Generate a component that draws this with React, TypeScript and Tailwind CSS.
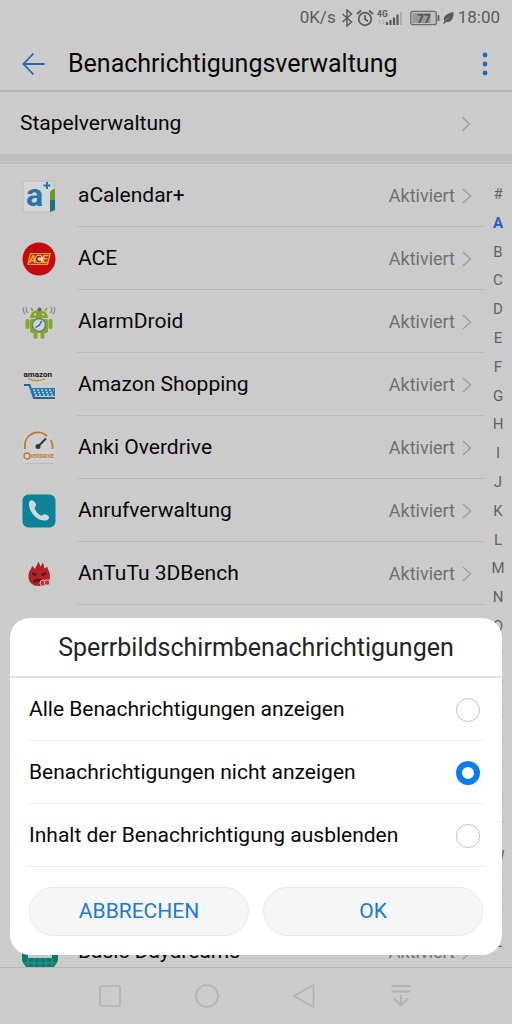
import { useState } from "react";
import type { ReactNode } from "react";

const CalendarIcon = () => (
  <svg viewBox="0 0 34 34" className="size-[34px] overflow-visible" aria-hidden="true">
    <rect x="1" y="2" width="31" height="31" rx="1" fill="#d3d5d6" stroke="#b9bbbc" />
    <path d="M28 14q1-4 5-4v11h-5z" fill="#6d9a2d" />
    <path d="M28 21h5v10l-5 2z" fill="#1f6f8d" />
    <text x="4" y="27" fontSize="32" fontWeight="700" fill="#2676a6" fontFamily="Roboto, sans-serif">a</text>
    <path d="M25 3v7M21.500 6.500h7" stroke="#2d76b4" strokeWidth="2" />
  </svg>
);

const AceIcon = () => (
  <svg viewBox="0 0 34 34" className="size-[34px]" aria-hidden="true">
    <circle cx="17" cy="17" r="16.500" fill="#c6080f" />
    <path d="M8 11h21l-3 12H5z" fill="#d8a51c" />
    <path d="M9 12.300h18.300l-2.400 9.400H6.600z" fill="#bd1b12" />
    <text x="7" y="21" fontSize="11" fontWeight="700" fontStyle="italic" fill="#eab51f" fontFamily="Roboto, sans-serif">A</text>
    <text x="20" y="21" fontSize="11" fontWeight="700" fontStyle="italic" fill="#eab51f" fontFamily="Roboto, sans-serif">E</text>
    <circle cx="17" cy="17" r="4.200" fill="#e9ddc5" />
    <path d="M18.800 15.200a2.500 2.500 0 1 0 0 3.600" fill="none" stroke="#b81313" strokeWidth="1.800" />
  </svg>
);

const AlarmDroidIcon = () => (
  <svg viewBox="0 0 34 34" className="size-[34px]" aria-hidden="true">
    <path d="M8 13a9 8 0 0 1 18 0z" fill="#82a72b" />
    <rect x="8" y="14" width="18" height="14" rx="2" fill="#82a72b" />
    <rect x="3.500" y="14" width="4" height="10" rx="1.900" fill="#82a72b" />
    <rect x="26.500" y="14" width="4" height="10" rx="1.900" fill="#82a72b" />
    <path d="M13.500 26v6M20.500 26v6" stroke="#82a72b" strokeWidth="4" strokeLinecap="round" />
    <path d="M11 6 9 3M23 6l2-3" stroke="#82a72b" strokeWidth="1.500" />
    <circle cx="13" cy="9.500" r="1" fill="#e1e5d3" />
    <circle cx="21" cy="9.500" r="1" fill="#e1e5d3" />
    <circle cx="17.500" cy="4.500" r="2" fill="#5060b0" />
    <circle cx="17" cy="20" r="6.500" fill="#c9d4da" stroke="#6c7d86" strokeWidth="1.400" />
    <path d="m13.500 22.500 4-2.500 2-4" fill="none" stroke="#3e5682" strokeWidth="1.300" />
    <path d="M2 2q-2 3 1 7M5 2q-2 3 1 6M32 2q2 3-1 7M29 2q2 3-1 6" fill="none" stroke="#8a8fa6" strokeWidth="1.300" />
  </svg>
);

const AmazonIcon = () => (
  <svg viewBox="0 0 34 34" className="size-[34px]" aria-hidden="true">
    <text x="1.500" y="9" fontSize="8" fontWeight="700" fill="#161616" fontFamily="Roboto, sans-serif">amazon</text>
    <path d="M6 10.500q8 4 17 .5" fill="none" stroke="#c98524" strokeWidth="1.200" />
    <path d="M2 17h5.500L12 30h21" fill="none" stroke="#1f6694" strokeWidth="2" />
    <path d="M8 20h25v8H11z" fill="#287ba9" />
    <path d="M11 22h21M12 24.500h20M13 27h19" stroke="#b9d4df" strokeWidth="1.500" strokeDasharray="2 2" />
  </svg>
);

const OverdriveIcon = () => (
  <svg viewBox="0 0 34 34" className="size-[34px]" aria-hidden="true">
    <rect x="1" y="2" width="32" height="31" rx="3" fill="#cfcfcf" />
    <path d="M3 18V15A13 12.500 0 0 1 25 5M28.500 9q2.500 3 2 9" fill="none" stroke="#be7a2c" strokeWidth="1.800" />
    <path d="m16 15.500 8-8" stroke="#31373b" strokeWidth="2" />
    <circle cx="16" cy="15.500" r="2.500" fill="#31373b" />
    <circle cx="5" cy="25" r="3" fill="none" stroke="#be7a2c" strokeWidth="1.300" />
    <text x="8.500" y="27" fontSize="5" fontWeight="700" fill="#be7a2c" fontFamily="Roboto, sans-serif">VERDRIVE</text>
    <path d="M3 32.500h28" stroke="#bcbcbc" strokeWidth="1" />
  </svg>
);

const PhoneIcon = () => (
  <svg viewBox="0 0 34 34" className="size-[34px]" aria-hidden="true">
    <rect x="0.500" y="0.500" width="33" height="33" rx="6" fill="#0c8398" />
    <path d="M8.500 6.500c2-1 4 .3 5.200 3.200.9 2.200-.7 3-1.200 4.500 1.500 3.500 3.800 6 6.700 7.600 1.800-.4 2.200-2 4.500-1.300 3 .9 4.200 3 2.800 4.500-1.300 1.600-4.500 2-7.500 1.100C12.500 23.500 8 18 7 11.500c-.3-2.200.2-4.200 1.500-5z" fill="#cadbd3" />
  </svg>
);

const AntutuIcon = () => (
  <svg viewBox="0 0 34 34" className="size-[34px]" aria-hidden="true">
    <path d="M17 29C9 29 6 24 6.500 18c.3-4 2.500-6 4-9l2.500 3 3.500-7.500 2 5 2.500-4 1.500 6 3-2c-.5 3 2.500 4.500 2.500 9.500 0 6-4 10-11 10z" fill="#b32128" />
    <path d="m10 15 5 2-1 2-4-1zM24 15l-5 2 1 2 4-1z" fill="#571a20" />
    <path d="M11 24c3-3 8-3 11 0l-1 2c-3-2-6-2-9 0z" fill="#571a20" />
    <circle cx="21" cy="26" r="3" fill="#bd3439" stroke="#d8b5b6" />
    <rect x="22.500" y="23" width="5" height="5" rx="1.500" fill="#bd3439" stroke="#d8b5b6" />
  </svg>
);

const DaydreamIcon = () => (
  <svg viewBox="0 0 36 34" className="h-[34px] w-9" aria-hidden="true">
    <rect width="36" height="34" rx="11" fill="#087d6c" />
    <path d="M6 20h24v3H6z" fill="#bccfc9" />
    <path d="M2 28h32M6 23v9M12 23v10M18 23v10M24 23v10M30 23v9" stroke="#359282" strokeWidth="1" />
  </svg>
);

const Chevron = () => (
  <svg viewBox="0 0 10 16" className="h-4 w-[10px] shrink-0" fill="none" stroke="#a2a2a2" strokeWidth="1.700" aria-hidden="true">
    <path d="m1 1 7.500 7L1 15" />
  </svg>
);

const apps: { name: string; icon: ReactNode }[] = [
  { name: "aCalendar+", icon: <CalendarIcon /> },
  { name: "ACE", icon: <AceIcon /> },
  { name: "AlarmDroid", icon: <AlarmDroidIcon /> },
  { name: "Amazon Shopping", icon: <AmazonIcon /> },
  { name: "Anki Overdrive", icon: <OverdriveIcon /> },
  { name: "Anrufverwaltung", icon: <PhoneIcon /> },
  { name: "AnTuTu 3DBench", icon: <AntutuIcon /> },
];

const options = [
  "Alle Benachrichtigungen anzeigen",
  "Benachrichtigungen nicht anzeigen",
  "Inhalt der Benachrichtigung ausblenden",
];

const letters = "#ABCDEFGHIJKLMNOPQRSTUVWXYZ".split("");

function AppRow({ name, icon }: { name: string; icon: ReactNode }) {
  return (
    <li>
      <a href="#app" className="flex h-[63px] items-center pl-[22px]">
        <span className="flex w-[55px] shrink-0">{icon}</span>
        <span className="flex h-full min-w-0 flex-1 items-center border-b border-[#b8b8b8] pt-px pr-3 pl-px">
          <span className="min-w-0 flex-1 truncate text-[21px]">{name}</span>
          <span className="mr-[7px] text-lg text-[#707070]">Aktiviert</span>
          <Chevron />
        </span>
      </a>
    </li>
  );
}

function StatusBar() {
  return (
    <div className="flex h-9 shrink-0 items-center justify-end pr-3 text-[17px] text-[#5c5c5c]">
      <span>0K/s</span>
      <svg viewBox="0 0 12 18" className="ml-[5px] h-[18px] w-3" fill="none" stroke="#5c5c5c" strokeWidth="1.500" aria-hidden="true">
        <path d="m1.500 5 9 8L6 17V1l4.500 4-9 8" />
      </svg>
      <svg viewBox="0 0 18 18" className="ml-[3px] size-[18px]" fill="none" stroke="#5c5c5c" strokeWidth="1.700" aria-hidden="true">
        <circle cx="9" cy="10" r="6.300" />
        <path d="M9 6v4.300l3 2M1 5l4-3.500M17 5l-4-3.500" />
      </svg>
      <svg viewBox="0 0 26 18" className="ml-[3px] h-[18px] w-[26px]" aria-hidden="true">
        <text x="0" y="7.500" fontSize="8.500" fontWeight="700" fill="#5c5c5c" fontFamily="Roboto, sans-serif">4G</text>
        <path d="M3 11v4m-1.500-2.500L3 11m3 0v4m1.500-1.500L6 15" fill="none" stroke="#aaa" />
        <path d="M10 13v3M13.500 11v5M17 8.500V16M20.500 5.500V16" stroke="#5c5c5c" strokeWidth="2.200" />
        <path d="M24 3v13" stroke="#aaa" strokeWidth="2" />
      </svg>
      <svg viewBox="0 0 30 16" className="ml-[7px] h-4 w-[30px]" aria-hidden="true">
        <rect x="0.800" y="1.300" width="25.500" height="13.400" rx="2" fill="#c0c0c0" stroke="#6c6c6c" strokeWidth="1.300" />
        <rect x="2.500" y="3" width="18" height="10" fill="#999" />
        <path d="M28.500 5v6" stroke="#5c5c5c" strokeWidth="1.800" />
        <text x="7" y="12.500" fontSize="12" fontWeight="700" fill="#505050" fontFamily="Roboto, sans-serif">77</text>
      </svg>
      <svg viewBox="0 0 12 14" className="mr-1 ml-[2px] h-[14px] w-3" aria-hidden="true">
        <path d="M11.500 1c.2 7-2.300 10.500-7.500 10L2 13l-1-.8 1.400-2C.5 6 3 3 11.500 1z" fill="#5c5c5c" />
        <path d="m2.500 10.500 4-4" stroke="#aaa" strokeWidth=".5" />
      </svg>
      <span>18:00</span>
    </div>
  );
}

export default function App() {
  const [selected, setSelected] = useState(1);
  const [open, setOpen] = useState(true);

  return (
    <div className="relative flex h-screen flex-col overflow-hidden bg-[#cbcbcb] font-['Roboto',sans-serif] text-[#080808]">
      <StatusBar />

      <header className="flex h-14 shrink-0 items-center border-b-2 border-[#b5b5b5] pt-[2px] pr-4 pl-[22px]">
        <button type="button" aria-label="Zurück" className="mr-[22px]">
          <svg viewBox="0 0 24 24" className="size-6" fill="none" stroke="#2169b9" strokeWidth="1.800">
            <path d="M22.500 12H2M11.500 1.500 1.500 12l10 10.500" />
          </svg>
        </button>
        <h1 className="min-w-0 flex-1 truncate text-[25px]">Benachrichtigungsverwaltung</h1>
        <button type="button" aria-label="Weitere Optionen" className="flex w-[22px] justify-center">
          <svg viewBox="0 0 6 24" className="h-6 w-[6px]" fill="#2169b9">
            <circle cx="3" cy="3" r="2.400" />
            <circle cx="3" cy="12" r="2.400" />
            <circle cx="3" cy="21" r="2.400" />
          </svg>
        </button>
      </header>

      <a href="#stapel" className="flex h-[62px] shrink-0 items-center justify-between pt-px pr-[41px] pl-5 text-[21px]">
        Stapelverwaltung
        <Chevron />
      </a>
      <div className="h-[10px] shrink-0 bg-[#bfbfbf]" />

      <main className="flex min-h-0 flex-1">
        <ul className="min-w-0 flex-1 overflow-hidden">
          {apps.map((app) => (
            <AppRow key={app.name} {...app} />
          ))}
          <li className="h-[315px]" aria-hidden="true" />
          <AppRow name="Basic Daydreams" icon={<DaydreamIcon />} />
        </ul>
        <nav aria-label="Alphabet" className="flex w-7 shrink-0 flex-col pt-4 pb-[10px] text-[15px] text-[#636363]">
          {letters.map((letter) => (
            <a
              key={letter}
              href="#index"
              className={
                letter === "A"
                  ? "flex min-h-0 flex-1 items-center justify-center font-bold text-[#1e66bb]"
                  : "flex min-h-0 flex-1 items-center justify-center"
              }
            >
              {letter}
            </a>
          ))}
        </nav>
      </main>

      <nav aria-label="Systemnavigation" className="flex h-[57px] shrink-0 items-center justify-center gap-[73px] border-t border-[#b5b5b5] bg-[#cbcbcb] pr-px">
        <button type="button" aria-label="Übersicht">
          <svg viewBox="0 0 24 24" className="size-6" fill="none" stroke="#b2b2b2" strokeWidth="1.600">
            <rect x="2" y="2" width="20" height="20" rx="1" />
          </svg>
        </button>
        <button type="button" aria-label="Startbildschirm">
          <svg viewBox="0 0 24 24" className="size-6" fill="none" stroke="#b2b2b2" strokeWidth="1.600">
            <circle cx="12" cy="12" r="11" />
          </svg>
        </button>
        <button type="button" aria-label="Zurück">
          <svg viewBox="0 0 24 24" className="size-6" fill="none" stroke="#b2b2b2" strokeWidth="1.600" strokeLinejoin="round">
            <path d="M21.500 1v22L2 12z" />
          </svg>
        </button>
        <button type="button" aria-label="Benachrichtigungen">
          <svg viewBox="0 0 24 24" className="size-6" fill="none" stroke="#b2b2b2" strokeWidth="1.800">
            <path d="M2.500 2h19M2.500 7.500h19M12 11v10.500M5 14.500l7 7 7-7" />
          </svg>
        </button>
      </nav>

      {open && (
        <section
          role="dialog"
          aria-modal="true"
          aria-labelledby="dialog-title"
          className="absolute inset-x-[10px] bottom-[69px] overflow-hidden rounded-[20px] bg-white pb-[19px]"
        >
          <h2 id="dialog-title" className="flex h-[60px] items-center justify-center border-b-2 border-[#e2e2e2] pt-px text-[25px] text-[#252525]">
            Sperrbildschirmbenachrichtigungen
          </h2>
          <div role="radiogroup" aria-labelledby="dialog-title" className="px-[19px]">
            {options.map((option, index) => (
              <label key={option} className="flex h-[63px] items-center justify-between border-b border-[#e8e8e8] pt-px pr-[3px] text-[21px]">
                {option}
                <input
                  type="radio"
                  name="lockscreen"
                  checked={selected === index}
                  onChange={() => setSelected(index)}
                  className="size-6 shrink-0 appearance-none rounded-full border border-[#c4c4c4] bg-white checked:border-[6px] checked:border-[#087cf8]"
                />
              </label>
            ))}
          </div>
          <div className="mt-5 flex gap-[14px] px-[19px]">
            <button type="button" onClick={() => setOpen(false)} className="h-[49px] flex-1 rounded-full border border-[#e8e8e8] bg-[#f6f6f6] text-[21px] text-[#187bdc]">
              ABBRECHEN
            </button>
            <button type="button" onClick={() => setOpen(false)} className="h-[49px] flex-1 rounded-full border border-[#e8e8e8] bg-[#f6f6f6] text-[21px] text-[#187bdc]">
              OK
            </button>
          </div>
        </section>
      )}
    </div>
  );
}
